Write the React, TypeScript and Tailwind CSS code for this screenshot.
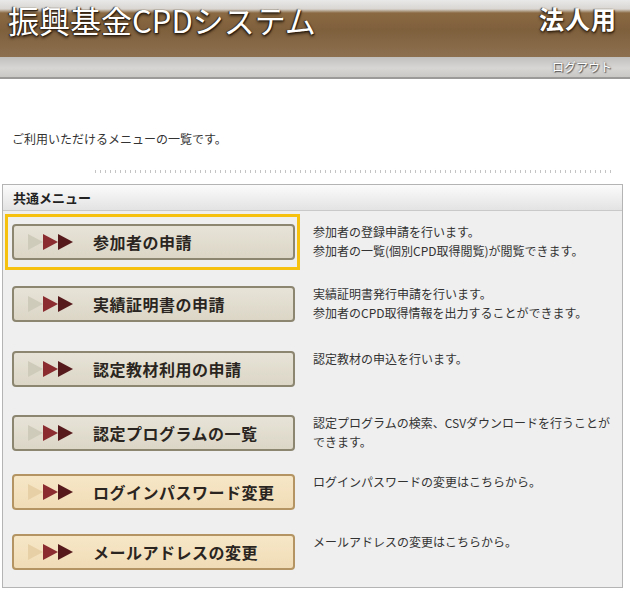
import React from "react";

type MenuItem = {
  label: string;
  lines: string[];
  tone: "gray" | "peach";
  focused?: boolean;
  gap: string;
};

const menuItems: MenuItem[] = [
  { label: "参加者の申請", lines: ["参加者の登録申請を行います。", "参加者の一覧(個別CPD取得閲覧)が閲覧できます。"], tone: "gray", focused: true, gap: "mt-[3px]" },
  { label: "実績証明書の申請", lines: ["実績証明書発行申請を行います。", "参加者のCPD取得情報を出力することができます。"], tone: "gray", gap: "mt-[6px]" },
  { label: "認定教材利用の申請", lines: ["認定教材の申込を行います。"], tone: "gray", gap: "mt-[9px]" },
  { label: "認定プログラムの一覧", lines: ["認定プログラムの検索、CSVダウンロードを行うことが", "できます。"], tone: "gray", gap: "mt-[8px]" },
  { label: "ログインパスワード変更", lines: ["ログインパスワードの変更はこちらから。"], tone: "peach", gap: "mt-[3px]" },
  { label: "メールアドレスの変更", lines: ["メールアドレスの変更はこちらから。"], tone: "peach", gap: "mt-[4px]" },
];

const Arrows = ({ faded }: { faded: string }) => (
  <svg width="46" height="16" viewBox="0 0 46 16">
    <polygon points="0,0 15,8 0,16" fill={faded} />
    <polygon points="15,0 30,8 15,16" fill="#8a2c30" />
    <polygon points="30,0 45,8 30,16" fill="#561a1c" />
  </svg>
);

const MenuButton = ({ item }: { item: MenuItem }) => {
  const peach = item.tone === "peach";
  return (
    <div
      className={
        peach
          ? "flex h-[36px] items-center rounded-[4px] border-2 border-[#b39462] bg-[linear-gradient(#f7e7c7,#f0dcb6)] pl-[14px]"
          : "flex h-[36px] items-center rounded-[4px] border-2 border-[#8c8671] bg-[linear-gradient(#e7e3d7,#dbd6c6)] pl-[14px]"
      }
    >
      <Arrows faded={peach ? "#e8d0a6" : "#cfcbbb"} />
      <span className="ml-[19px] text-[16px] font-bold leading-[20px] tracking-[0.5px] text-[#2a2520]">{item.label}</span>
    </div>
  );
};

export default function App() {
  return (
    <div className="w-[630px] h-[592px] overflow-hidden bg-white font-['Noto_Sans_CJK_JP','Noto_Sans',sans-serif] text-[#333]">
      {/* header */}
      <div className="flex h-[57px] items-start justify-between bg-[linear-gradient(#e9e9e9_0px,#d9d6d2_9px,#8a6942_13px,#7f603d_30px,#8d7050_57px)] px-[8px]">
        <h1 className="mt-[2px] text-[31px] leading-[36px] text-white [text-shadow:1px_1px_1px_#2e2012,-1px_0_1px_#2e2012,0_2px_3px_#2e2012]">
          振興基金CPDシステム
        </h1>
        <span className="mr-[5px] mt-[4px] text-[25px] font-bold leading-[28px] tracking-[1px] text-white [text-shadow:1px_1px_1px_#3a2814,-1px_0_1px_#3a2814,0_2px_3px_#3a2814]">
          法人用
        </span>
      </div>
      <div className="flex h-[20px] items-center justify-end bg-[linear-gradient(#c2c0be,#d8d6d4_55%,#cac8c5)] pr-[18px]">
        <span className="text-[12px] leading-none text-white [text-shadow:1px_1px_1px_#555,0_0_2px_#666]">ログアウト</span>
      </div>
      <div className="h-[2px] bg-[#9c9a98]" />

      {/* intro */}
      <p className="ml-[12px] mt-[52px] text-[12px] leading-[16px] text-[#333]">ご利用いただけるメニューの一覧です。</p>
      <div className="ml-[95px] mr-[15px] mt-[23px] h-[3px] bg-[repeating-linear-gradient(90deg,#c4c4c4_0px,#c4c4c4_1px,transparent_1px,transparent_5px)]" />

      {/* panel */}
      <div className="ml-[2px] mr-[7px] mt-[11px] h-[404px] border border-[#b4b4b4] bg-[#efefef]">
        <div className="flex h-[26px] items-center border-b border-[#c9c9c9] bg-[linear-gradient(#fbfbfb,#e3e3e3)] pl-[10px]">
          <span className="text-[13px] font-bold leading-[16px] text-[#222]">共通メニュー</span>
        </div>
        <div className="flex flex-col pl-[2px]">
          {menuItems.map((item) => (
            <div key={item.label} className={`flex ${item.gap}`}>
              <div
                className={
                  item.focused
                    ? "w-[295px] shrink-0 border-[3px] border-[#f7c20f] pb-[7px] pl-[4px] pr-[2px] pt-[7px]"
                    : "w-[295px] shrink-0 border-[3px] border-transparent pb-[7px] pl-[4px] pr-[2px] pt-[7px]"
                }
              >
                <MenuButton item={item} />
              </div>
              <div className="ml-[13px] pt-[8px] text-[12px] leading-[19px] text-[#333]">
                {item.lines.map((l) => (
                  <p key={l}>{l}</p>
                ))}
              </div>
            </div>
          ))}
        </div>
      </div>
    </div>
  );
}
